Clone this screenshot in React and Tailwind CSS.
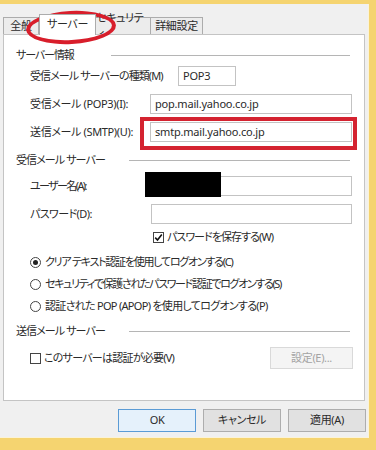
import React from "react";

const font = "font-['Noto_Sans','Noto_Sans_CJK_JP',sans-serif] [font-feature-settings:'palt']";

function Heading({ text, lineStart, tr }) {
  return (
    <div className="flex items-center h-[18px] pl-[12px] pr-[14px]">
      <span className={`whitespace-nowrap ${tr}`}>{text}</span>
      <div className={`flex-1 h-px bg-[#b5b5b5] ${lineStart}`} />
    </div>
  );
}

function Input({ value, className = "" }) {
  return (
    <div className={`h-[20px] border border-[#c3c3c3] bg-white flex items-center px-[4px] tracking-[-0.2px] ${className}`}>
      {value}
    </div>
  );
}

function Radio({ checked, label, tr }) {
  return (
    <div className="flex items-center h-[22px] pl-[26px]">
      <div className="w-[11px] h-[11px] rounded-full border border-[#444] bg-white flex items-center justify-center">
        {checked && <div className="w-[5px] h-[5px] rounded-full bg-[#222]" />}
      </div>
      <span className={`ml-[4px] whitespace-nowrap ${tr}`}>{label}</span>
    </div>
  );
}

function Checkbox({ checked }) {
  return (
    <div className="w-[11px] h-[11px] border border-[#444] bg-white flex items-center justify-center">
      {checked && (
        <svg width="9" height="9" viewBox="0 0 9 9">
          <path d="M1.2 4.6 L3.5 7 L7.8 1.6" stroke="#111" strokeWidth="1.6" fill="none" />
        </svg>
      )}
    </div>
  );
}

export default function App() {
  return (
    <div className={`relative w-[376px] h-[450px] bg-[#f5d470] overflow-hidden text-[11px] tracking-[-0.35px] text-[#2a2a2a] ${font}`}>
      <div className="mt-[4px] w-[369px] h-[434px] bg-[#f0f0f0] border-r border-b border-[#fbf3d8] flex flex-col">
        {/* tabs */}
        <div className="flex items-end pt-[9px] pl-[3px] h-[30px]">
          <div className="h-[17px] w-[36px] border border-b-0 border-[#acacac] bg-[#ececec] flex items-center justify-center">全般</div>
          <div className="h-[21px] w-[57px] -mb-px relative z-10 border border-b-0 border-[#acacac] bg-white flex items-start pt-[1px] justify-center">サーバー</div>
          <div className="h-[17px] w-[55px] border border-b-0 border-l-0 border-[#acacac] bg-[#ececec] flex items-center justify-center">セキュリティ</div>
          <div className="h-[17px] w-[52px] border border-b-0 border-l-0 border-[#acacac] bg-[#ececec] flex items-center justify-center">詳細設定</div>
        </div>
        {/* panel */}
        <div className="ml-[3px] w-[362px] h-[367px] bg-white border border-[#c4c4c4] pt-[11px] flex flex-col">
          <Heading text="サーバー情報" lineStart="ml-[37px]" tr="tracking-[-1.1px]" />
          <div className="flex items-center h-[24px] pl-[26px]">
            <span className="w-[148px] whitespace-nowrap tracking-[-0.9px]">受信メール サーバーの種類(M)</span>
            <Input value="POP3" className="w-[58px]" />
          </div>
          <div className="flex items-center h-[24px] mt-[4px] pl-[26px]">
            <span className="w-[120px] whitespace-nowrap">受信メール (POP3)(I):</span>
            <Input value="pop.mail.yahoo.co.jp" className="w-[202px]" />
          </div>
          <div className="flex items-center h-[24px] mt-[4px] pl-[26px]">
            <span className="w-[120px] whitespace-nowrap">送信メール (SMTP)(U):</span>
            <Input value="smtp.mail.yahoo.co.jp" className="w-[202px]" />
          </div>
          <div className="mt-[7px]">
            <Heading text="受信メール サーバー" lineStart="ml-[24px]" tr="tracking-[-0.9px]" />
          </div>
          <div className="flex items-center h-[24px] mt-[5px] pl-[26px]">
            <span className="w-[120px] whitespace-nowrap tracking-[-1.6px]">ユーザー名(A):</span>
            <Input value="" className="w-[202px]" />
          </div>
          <div className="flex items-center h-[24px] mt-[4px] pl-[26px]">
            <span className="w-[121px] whitespace-nowrap tracking-[-0.6px]">パスワード(D):</span>
            <Input value="" className="w-[201px]" />
          </div>
          <div className="flex items-center h-[22px] pl-[149px]">
            <Checkbox checked />
            <span className="ml-[3px] whitespace-nowrap tracking-[-0.95px]">パスワードを保存する(W)</span>
          </div>
          <div className="mt-[3px]">
            <Radio checked label="クリア テキスト認証を使用してログオンする(C)" tr="tracking-[-1.25px]" />
            <Radio label="セキュリティで保護されたパスワード認証でログオンする(S)" tr="tracking-[-1.35px]" />
            <Radio label="認証された POP (APOP) を使用してログオンする(P)" tr="tracking-[-0.7px]" />
          </div>
          <div className="mt-[5px]">
            <Heading text="送信メール サーバー" lineStart="ml-[24px]" tr="tracking-[-0.9px]" />
          </div>
          <div className="flex items-center h-[22px] mt-[7px] pl-[26px] pr-[11px]">
            <Checkbox />
            <span className="ml-[3px] whitespace-nowrap flex-1 tracking-[-0.75px]">このサーバーは認証が必要(V)</span>
            <div className="w-[83px] h-[22px] border border-[#d9d9d9] bg-[#f4f4f4] text-[#a3a3a3] flex items-center justify-center">設定(E)...</div>
          </div>
        </div>
        {/* bottom buttons */}
        <div className="flex justify-end gap-[7px] mt-[8px] pr-[2px]">
          <div className="w-[78px] h-[23px] border border-[#5b9bd5] bg-[#e5f1fb] flex items-center justify-center">OK</div>
          <div className="w-[78px] h-[23px] border border-[#adadad] bg-[#e1e1e1] flex items-center justify-center">キャンセル</div>
          <div className="w-[78px] h-[23px] border border-[#adadad] bg-[#e1e1e1] flex items-center justify-center">適用(A)</div>
        </div>
      </div>

      {/* annotations / redaction overlays */}
      <div className="absolute left-[26px] top-[11px] w-[90px] h-[33px] rounded-[50%] border-[4px] border-[#d81e2b] rotate-[-3deg]" />
      <div className="absolute left-[140px] top-[117px] w-[217px] h-[33px] border-[4px] border-[#d42330]" />
      <div className="absolute left-[145px] top-[172px] w-[76px] h-[25px] bg-black" />
    </div>
  );
}
